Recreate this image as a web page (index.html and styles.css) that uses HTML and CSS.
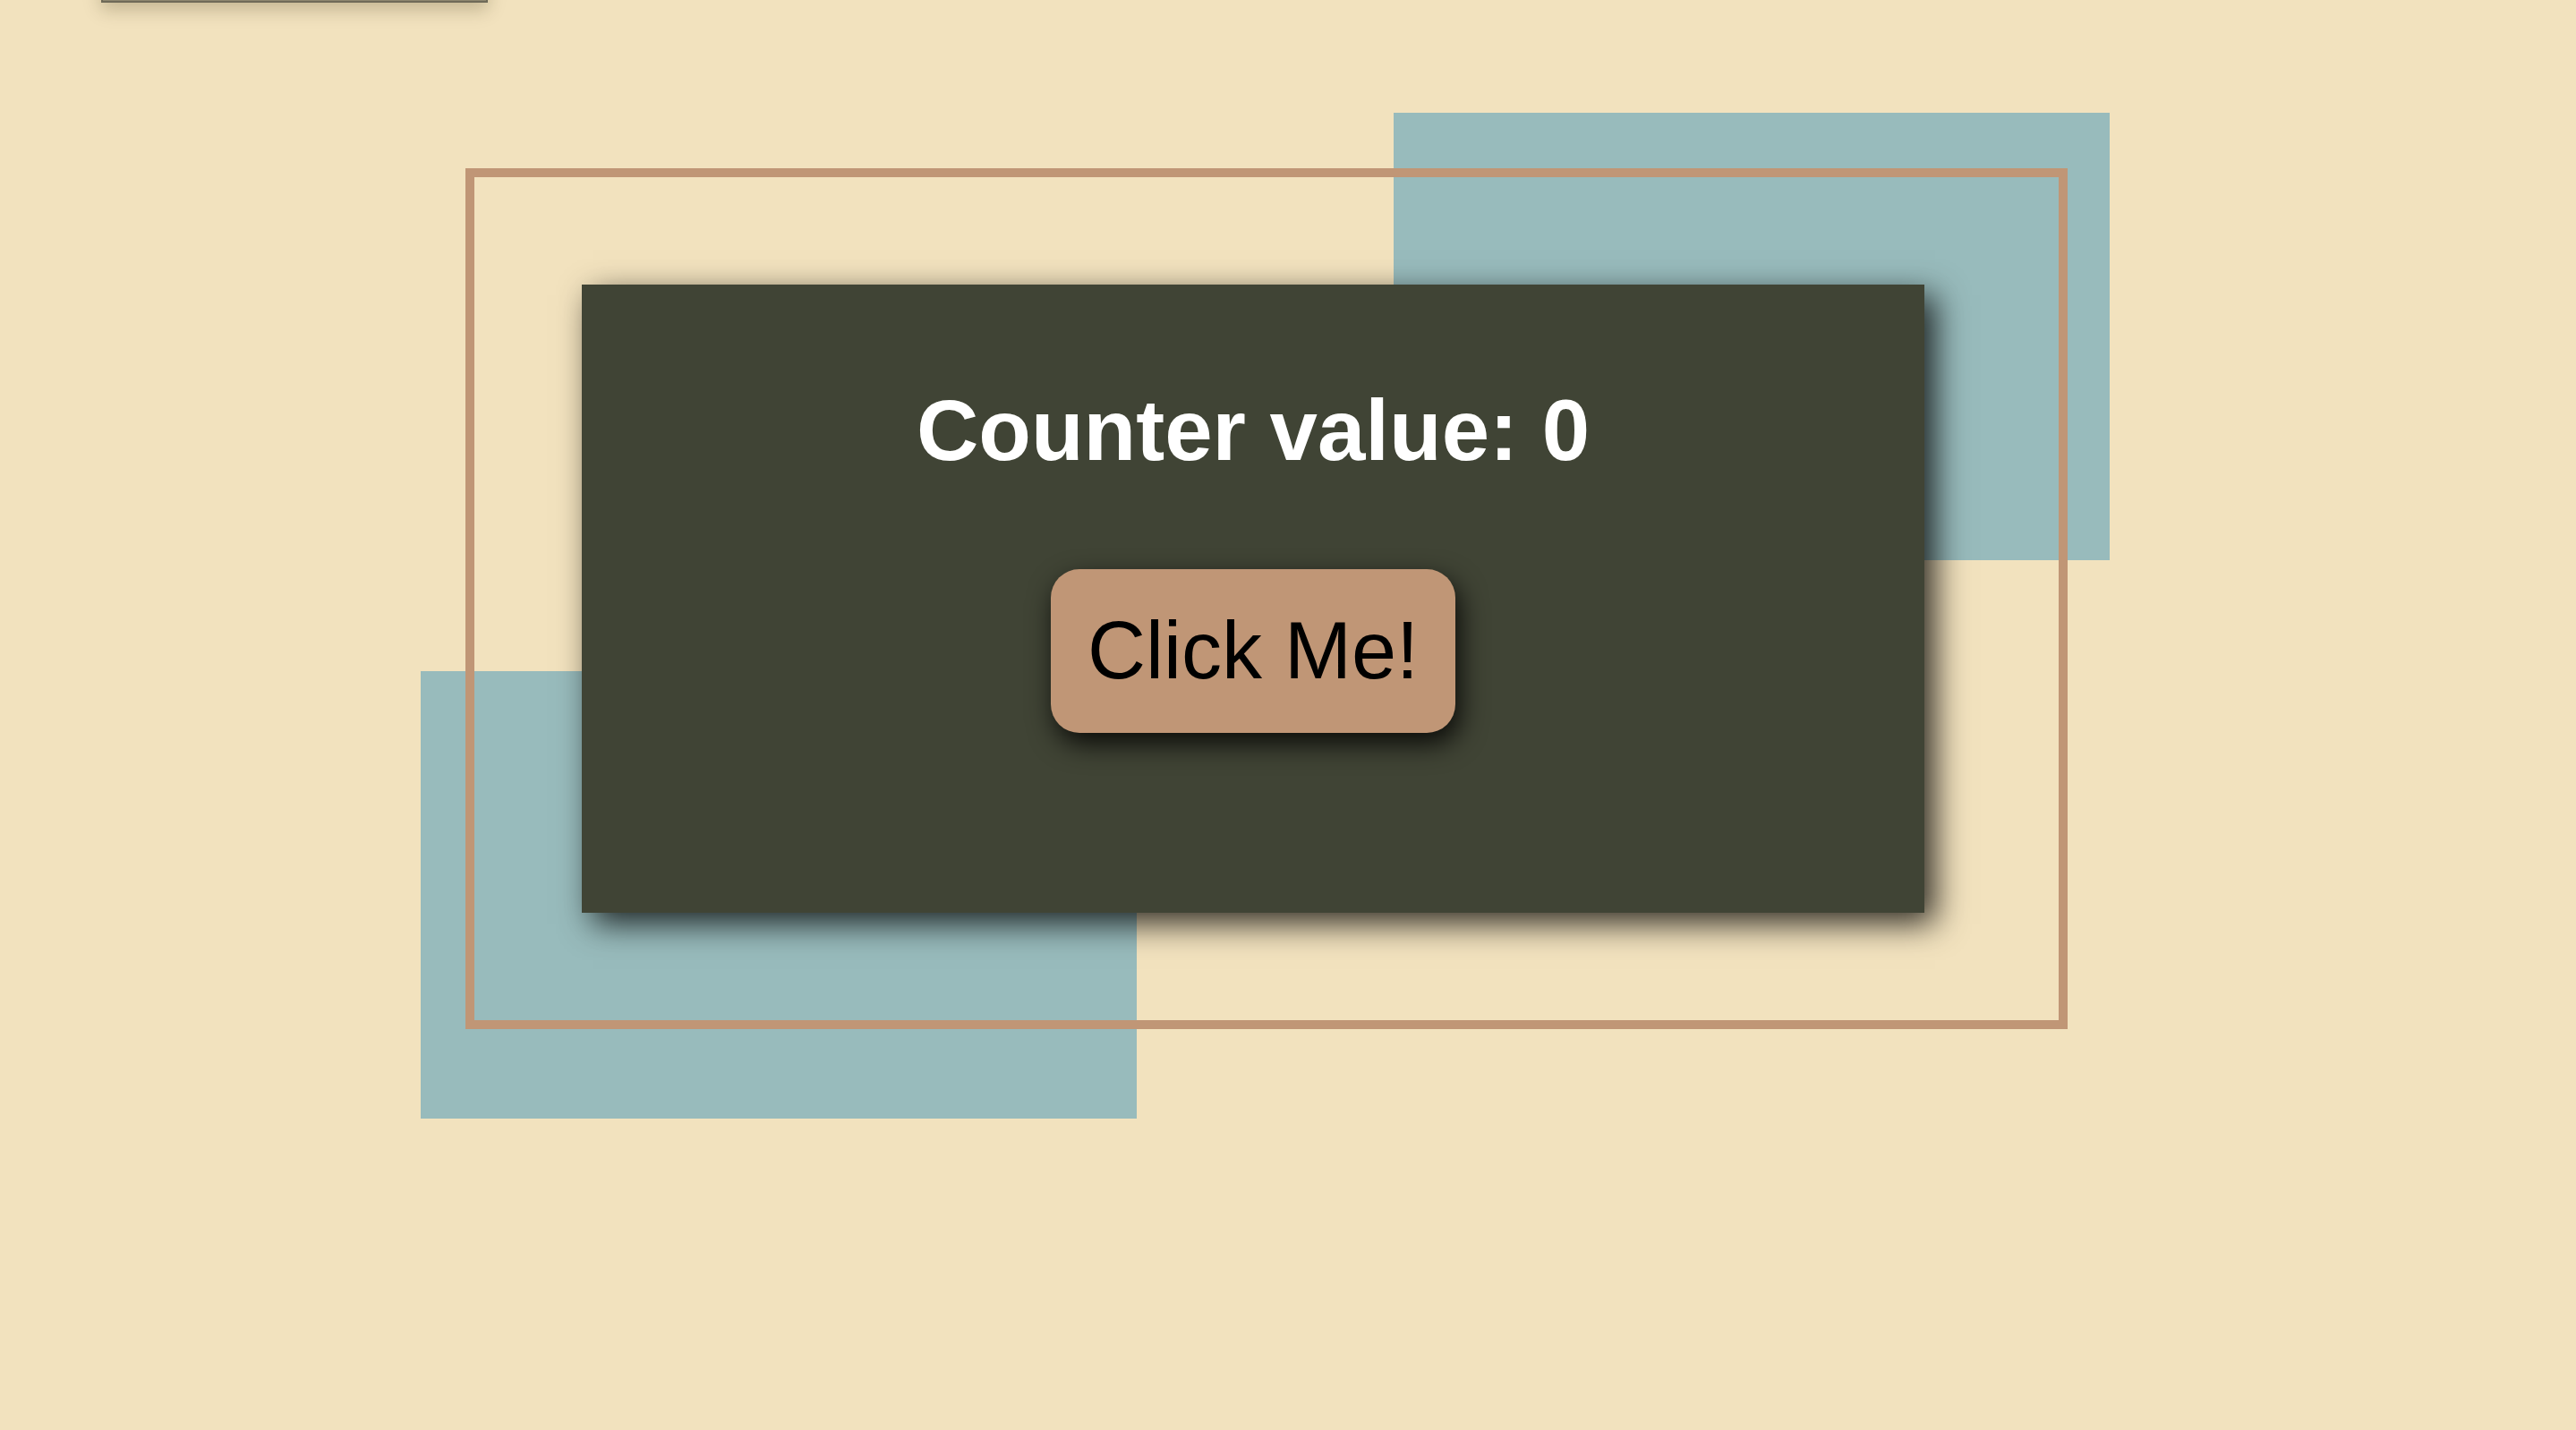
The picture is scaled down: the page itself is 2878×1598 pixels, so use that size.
FILE: index.html
```html
<!DOCTYPE html>
<html lang="en">
<head>
<meta charset="utf-8">
<title>Counter</title>
<link rel="stylesheet" href="styles.css">
</head>
<body>
<div class="topbar"></div>
<main class="stage">
  <div class="scene">
    <div class="blob blob-tr"></div>
    <div class="blob blob-bl"></div>
    <div class="frame"></div>
    <section class="card">
      <h1 class="title">Counter value: 0</h1>
      <button class="btn" type="button">Click Me!</button>
    </section>
  </div>
</main>
</body>
</html>
```
FILE: styles.css
```css
html, body {
  margin: 0;
  padding: 0;
}
body {
  background: #f2e2be;
  font-family: "Liberation Sans", Arial, sans-serif;
  min-height: 1598px;
  overflow: hidden;
  position: relative;
}
.topbar {
  position: absolute;
  left: 113px;
  top: -57px;
  width: 432px;
  height: 60px;
  box-sizing: border-box;
  background: #8e876f;
  border: 2px solid #6f6a58;
  box-shadow: 0 8px 18px rgba(60, 50, 20, 0.25);
}
.stage {
  padding: 318px 0 0 650px;
}
.scene {
  position: relative;
  width: 1500px;
}
.blob {
  position: absolute;
  width: 800px;
  height: 500px;
  background: #98bbbc;
}
.blob-tr {
  left: 907px;
  top: -192px;
}
.blob-bl {
  left: -180px;
  top: 432px;
}
.frame {
  position: absolute;
  left: -130px;
  top: -130px;
  width: 1790px;
  height: 962px;
  box-sizing: border-box;
  border: 10px solid #c09676;
}
.card {
  position: relative;
  height: 702px;
  box-sizing: border-box;
  background: #404435;
  box-shadow: 12px 12px 34px rgba(0, 0, 0, 0.8);
  display: flex;
  flex-direction: column;
  align-items: center;
  padding-top: 108px;
}
.title {
  margin: 0;
  color: #ffffff;
  font-size: 96px;
  font-weight: bold;
  line-height: 110px;
}
.btn {
  margin-top: 100px;
  font-family: "Liberation Sans", Arial, sans-serif;
  font-size: 90px;
  line-height: 103px;
  padding: 40px 41px;
  background: #c09676;
  color: #000000;
  border: none;
  border-radius: 32px;
  box-shadow: 5px 12px 30px rgba(0, 0, 0, 0.85);
  cursor: pointer;
}
```
